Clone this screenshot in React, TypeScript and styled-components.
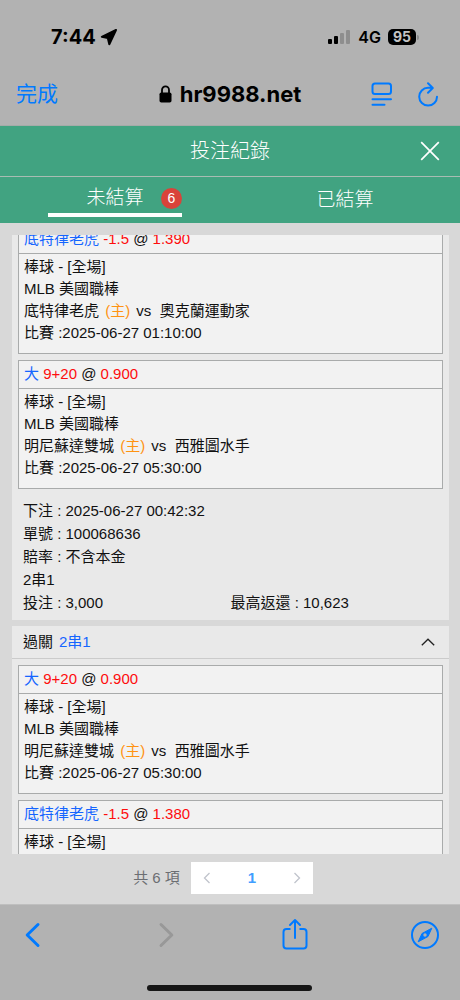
import React from 'react';
import styled, { createGlobalStyle } from 'styled-components';

const GlobalStyle = createGlobalStyle`
  * { box-sizing: border-box; }
  body {
    margin: 0;
    background: #b2b2b2;
    color: #111;
    font: 15px/22px "Liberation Sans", "Noto Sans CJK TC", sans-serif;
  }
  button {
    margin: 0;
    padding: 0;
    border: 0;
    background: none;
    color: inherit;
    font: inherit;
    cursor: pointer;
  }
  svg { display: block; flex: none; }
`;

const Screen = styled.div`
  display: flex;
  flex-direction: column;
  height: 100vh;
  background: #d8d8d8;
`;

const StatusBar = styled.div`
  display: flex;
  flex: none;
  align-items: center;
  justify-content: space-between;
  height: 74px;
  padding: 0 41px 0 51px;
  background: #b2b2b2;
  color: #000;
  font-family: Inter, sans-serif;
`;

const StatusGroup = styled.div<{ $gap: number }>`
  display: flex;
  align-items: center;
  gap: ${p => p.$gap}px;
`;

const Clock = styled.span`
  font-size: 20px;
  font-weight: 700;
`;

const Network = styled.span`
  font-size: 16px;
  font-weight: 600;
`;

const Battery = styled.span`
  width: 28px;
  height: 16px;
  border-radius: 5px;
  background: #000;
  color: #c4c4c4;
  font-size: 14px;
  font-weight: 700;
  line-height: 16px;
  text-align: center;
`;

const BatteryGroup = styled.div`
  display: flex;
  align-items: center;
  gap: 1px;
`;

const BatteryTip = styled.span`
  width: 2px;
  height: 5px;
  border-radius: 0 2px 2px 0;
  background: #8d8d8d;
`;

const BrowserBar = styled.header`
  display: grid;
  flex: none;
  grid-template-columns: 1fr auto 1fr;
  align-items: center;
  height: 52px;
  padding: 0 16px 12px;
  border-bottom: 1px solid #a4aba8;
  background: #b2b2b2;
`;

const DoneButton = styled.button`
  justify-self: start;
  color: #007aff;
  font-size: 21px;
`;

const Address = styled.div`
  display: flex;
  align-items: center;
  gap: 8px;
  color: #000;
  font: 700 22px/28px Inter, sans-serif;
`;

const BrowserActions = styled.div`
  display: flex;
  justify-self: end;
  align-items: center;
  gap: 24px;
  padding-right: 5px;
  color: #007aff;
`;

const TitleBar = styled.div`
  display: grid;
  flex: none;
  grid-template-columns: 1fr auto 1fr;
  align-items: center;
  height: 51px;
  padding: 0 20px;
  border-bottom: 1px solid #a9bcb3;
  background: #41a381;
  color: #fff;
`;

const Title = styled.h1`
  grid-column: 2;
  margin: 0;
  font-size: 20px;
  font-weight: 300;
  line-height: 28px;
`;

const CloseButton = styled.button`
  justify-self: end;
`;

const Tabs = styled.div`
  display: grid;
  flex: none;
  grid-template-columns: 1fr 1fr;
  height: 46px;
  background: #41a381;
  color: #fff;
`;

const Tab = styled.button`
  display: flex;
  align-items: center;
  justify-content: center;
  font-size: 19px;
  font-weight: 300;
`;

const TabLabel = styled.span<{ $active?: boolean }>`
  position: relative;
  width: 134px;
  line-height: 28px;
  ${p => p.$active && `
    padding-bottom: 1px;
    border-bottom: 4px solid #fff;
  `}
`;

const Badge = styled.span`
  position: absolute;
  top: 4px;
  right: 0;
  width: 21px;
  height: 21px;
  border-radius: 50%;
  background: #d9433a;
  font-size: 14px;
  line-height: 21px;
  text-align: center;
`;

const TicketList = styled.main`
  flex: 1;
  min-height: 0;
  margin: 12px 11px 0 12px;
  overflow: hidden;
`;

/* The list is shown scrolled part of the way into the first slip. */
const ScrolledContent = styled.div`
  display: grid;
  gap: 6px;
  margin-top: -10px;
`;

const Ticket = styled.section`
  background: #e9e9e9;
`;

const TicketHeader = styled.button`
  display: flex;
  align-items: center;
  justify-content: space-between;
  width: 100%;
  height: 33px;
  padding: 0 14px 0 11px;
  border-bottom: 1px solid #cbcbcb;
  text-align: left;
`;

const TicketKind = styled.span`
  display: flex;
  gap: 6px;
`;

const Legs = styled.div<{ $inset?: boolean }>`
  display: grid;
  gap: 6px;
  padding: ${p => (p.$inset ? '6px' : '0')} 6px 0;
`;

const Leg = styled.article`
  border: 1px solid #a9abab;
  background: #f2f2f2;
`;

const LegHead = styled.div`
  height: 28px;
  padding: 0 5px;
  border-bottom: 1px solid #a9abab;
  line-height: 26px;
`;

const LegBody = styled.div`
  padding: 2px 5px 9px;
  white-space: pre-wrap;
`;

const Tone = styled.span<{ $tone: 'pick' | 'odds' }>`
  color: ${p => ({ pick: '#1565ff', odds: '#fe0d0d' })[p.$tone]};
`;

const HomeMark = styled.span`
  margin: 0 2px;
  color: #ff9312;
`;

const Details = styled.div`
  display: grid;
  grid-template-columns: 1fr 1fr;
  padding: 10px 11px 6px;
  line-height: 23px;
`;

const DetailLine = styled.div<{ $half?: boolean }>`
  grid-column: ${p => (p.$half ? 'auto' : '1 / -1')};
`;

const Pager = styled.nav`
  display: flex;
  flex: none;
  align-items: center;
  justify-content: center;
  gap: 11px;
  padding: 8px 14px 10px 0;
  color: #6c6e72;
`;

const PageButtons = styled.div`
  display: grid;
  grid-template-columns: 32px 58px 32px;
  height: 32px;
  background: #fff;
  color: #c0c4cc;
`;

const PageButton = styled.button<{ $current?: boolean }>`
  display: flex;
  align-items: center;
  justify-content: center;
  ${p => p.$current && `
    color: #409eff;
    font-weight: 700;
  `}
`;

const Toolbar = styled.footer`
  display: flex;
  flex: none;
  flex-direction: column;
  align-items: center;
  justify-content: space-between;
  height: 96px;
  padding: 12px 20px 9px 18px;
  border-top: 1px solid #bfbfbf;
  background: #b2b2b2;
`;

const ToolbarActions = styled.div`
  display: flex;
  align-items: center;
  justify-content: space-between;
  width: 100%;
  color: #007aff;
`;

const HomeIndicator = styled.div`
  width: 165px;
  height: 6px;
  border-radius: 3px;
  background: #161616;
`;

interface LegData {
  pick: string;
  line: string;
  odds: string;
  home: string;
  away: string;
  time: string;
}

const tigers = { pick: '底特律老虎', line: '-1.5', home: '底特律老虎', away: '奧克蘭運動家', time: '2025-06-27 01:10:00' };
const twins: LegData = { pick: '大', line: '9+20', odds: '0.900', home: '明尼蘇達雙城', away: '西雅圖水手', time: '2025-06-27 05:30:00' };

const firstTicket: LegData[] = [{ ...tigers, odds: '1.390' }, twins];
/* The same event keeps its kick-off time on every slip. */
const secondTicket: LegData[] = [twins, { ...tigers, odds: '1.380' }];

function LegCard({ leg }: { leg: LegData }) {
  return (
    <Leg>
      <LegHead>
        <Tone $tone="pick">{leg.pick}</Tone> <Tone $tone="odds">{leg.line}</Tone> @ <Tone $tone="odds">{leg.odds}</Tone>
      </LegHead>
      <LegBody>
        <div>棒球 - [全場]</div>
        <div>MLB 美國職棒</div>
        <div>
          {leg.home} <HomeMark>(主)</HomeMark>{' vs  '}{leg.away}
        </div>
        <div>比賽 :{leg.time}</div>
      </LegBody>
    </Leg>
  );
}

export default function App() {
  return (
    <>
      <GlobalStyle />
      <Screen>
        <StatusBar>
          <StatusGroup $gap={4}>
            <Clock>7:44</Clock>
            <svg width="18" height="18" viewBox="0 0 18 18">
              <path d="M16 2 1.800 8.800 7.800 10 9.300 16.200Z" fill="#000" stroke="#000" strokeWidth="2" strokeLinejoin="round" />
            </svg>
          </StatusGroup>
          <StatusGroup $gap={7}>
            <svg width="23" height="16" viewBox="0 0 23 16">
              <rect x="0" y="10" width="4" height="5" rx="1" fill="#000" />
              <rect x="6" y="7" width="4" height="8" rx="1" fill="#000" />
              <rect x="12" y="4" width="4" height="11" rx="1" fill="#8e8e8e" />
              <rect x="18" y="1" width="4" height="14" rx="1" fill="#8e8e8e" />
            </svg>
            <Network>4G</Network>
            <BatteryGroup>
              <Battery>95</Battery>
              <BatteryTip />
            </BatteryGroup>
          </StatusGroup>
        </StatusBar>

        <BrowserBar>
          <DoneButton type="button">完成</DoneButton>
          <Address>
            <svg width="13" height="18" viewBox="0 0 13 18">
              <rect x="0.500" y="7.500" width="12" height="10" rx="1.800" fill="#000" />
              <path d="M3 8V5a3.500 3.700 0 0 1 7 0v3" fill="none" stroke="#000" strokeWidth="1.800" />
            </svg>
            hr9988.net
          </Address>
          <BrowserActions>
            <button type="button" aria-label="閱讀器">
              <svg width="22" height="26" viewBox="0 0 22 26" fill="none" stroke="currentColor" strokeWidth="2" strokeLinecap="round">
                <rect x="1.500" y="2.500" width="18.500" height="10.500" rx="2.500" />
                <path d="M1.500 18.300H20M1.500 23.700h12" />
              </svg>
            </button>
            <button type="button" aria-label="重新載入">
              <svg width="22" height="26" viewBox="0 0 22 26" fill="none" stroke="currentColor" strokeWidth="2" strokeLinecap="round" strokeLinejoin="round">
                <path d="M15.200 6.800H11A8.900 8.900 0 1 0 20 15.700M11 2.300l4.800 4.700L11 11.700" />
              </svg>
            </button>
          </BrowserActions>
        </BrowserBar>

        <TitleBar>
          <Title>投注紀錄</Title>
          <CloseButton type="button" aria-label="關閉">
            <svg width="20" height="20" viewBox="0 0 20 20" fill="none" stroke="currentColor" strokeWidth="1.700">
              <path d="m1.200 1.200 17.600 17.600M18.800 1.200 1.200 18.800" />
            </svg>
          </CloseButton>
        </TitleBar>

        <Tabs role="tablist">
          <Tab type="button" role="tab" aria-selected="true">
            <TabLabel $active>
              未結算
              <Badge>6</Badge>
            </TabLabel>
          </Tab>
          <Tab type="button" role="tab" aria-selected="false">
            <TabLabel>已結算</TabLabel>
          </Tab>
        </Tabs>

        <TicketList>
          <ScrolledContent>
            <Ticket>
              <Legs>
                {firstTicket.map(leg => <LegCard key={leg.pick} leg={leg} />)}
              </Legs>
              <Details>
                <DetailLine>下注 : 2025-06-27 00:42:32</DetailLine>
                <DetailLine>單號 : 100068636</DetailLine>
                <DetailLine>賠率 : 不含本金</DetailLine>
                <DetailLine>2串1</DetailLine>
                <DetailLine $half>投注 : 3,000</DetailLine>
                <DetailLine $half>最高返還 : 10,623</DetailLine>
              </Details>
            </Ticket>
            <Ticket>
              <TicketHeader type="button" aria-expanded="true">
                <TicketKind>過關 <Tone $tone="pick">2串1</Tone></TicketKind>
                <svg width="14" height="8" viewBox="0 0 14 8" fill="none" stroke="#222" strokeWidth="1.300">
                  <path d="m.800 7.200 6.200-6 6.200 6" />
                </svg>
              </TicketHeader>
              <Legs $inset>
                {secondTicket.map(leg => <LegCard key={leg.pick} leg={leg} />)}
              </Legs>
            </Ticket>
          </ScrolledContent>
        </TicketList>

        <Pager aria-label="分頁">
          <span>共 6 項</span>
          <PageButtons>
            <PageButton type="button" aria-label="上一頁">
              <svg width="8" height="12" viewBox="0 0 8 12" fill="none" stroke="currentColor" strokeWidth="1.300">
                <path d="M6.500 1 1.500 6l5 5" />
              </svg>
            </PageButton>
            <PageButton type="button" $current aria-current="page">1</PageButton>
            <PageButton type="button" aria-label="下一頁">
              <svg width="8" height="12" viewBox="0 0 8 12" fill="none" stroke="currentColor" strokeWidth="1.300">
                <path d="m1.500 1 5 5-5 5" />
              </svg>
            </PageButton>
          </PageButtons>
        </Pager>

        <Toolbar>
          <ToolbarActions>
            <button type="button" aria-label="返回">
              <svg width="30" height="34" viewBox="0 0 30 34" fill="none" stroke="currentColor" strokeWidth="3" strokeLinecap="round" strokeLinejoin="round">
                <path d="M20 7.500 9.200 18 20 28.500" />
              </svg>
            </button>
            <button type="button" aria-label="前進">
              <svg width="30" height="34" viewBox="0 0 30 34" fill="none" stroke="#989898" strokeWidth="3" strokeLinecap="round" strokeLinejoin="round">
                <path d="M12 7.500 22.800 18 12 28.500" />
              </svg>
            </button>
            <button type="button" aria-label="分享">
              <svg width="30" height="34" viewBox="0 0 30 34" fill="none" stroke="currentColor" strokeWidth="2" strokeLinecap="round" strokeLinejoin="round">
                <path d="M11.500 12H7.500a3 3 0 0 0-3 3v13.500a3 3 0 0 0 3 3h17a3 3 0 0 0 3-3V15a3 3 0 0 0-3-3h-4" strokeLinecap="butt" />
                <path d="M16 21V3M11 8l5-5 5 5" />
              </svg>
            </button>
            <button type="button" aria-label="Safari">
              <svg width="30" height="34" viewBox="0 0 30 34">
                <circle cx="15" cy="18" r="13" fill="none" stroke="currentColor" strokeWidth="2" />
                <path d="M21.800 11.200 18 19.500 8.200 24.800 12 16.500Z" fill="currentColor" stroke="currentColor" strokeLinejoin="round" />
                <circle cx="15" cy="18" r="1.700" fill="#b2b2b2" />
              </svg>
            </button>
          </ToolbarActions>
          <HomeIndicator />
        </Toolbar>
      </Screen>
    </>
  );
}
